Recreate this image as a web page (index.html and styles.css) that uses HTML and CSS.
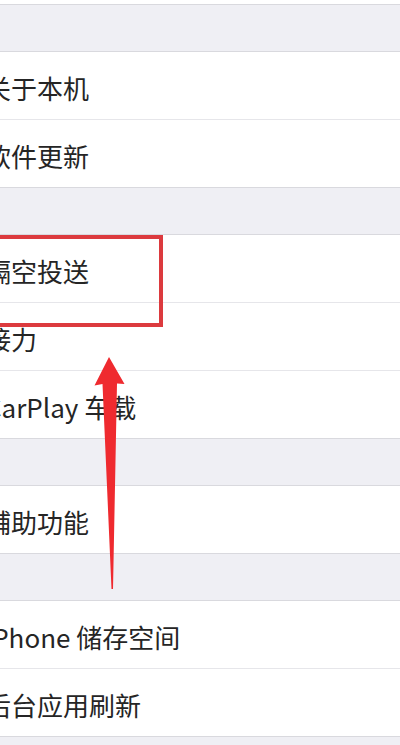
FILE: index.html
```html
<!DOCTYPE html>
<html lang="zh-CN">
<head>
  <meta charset="UTF-8" />
  <meta name="viewport" content="width=device-width, initial-scale=1.0"/>
  <title>通用</title>
  <link rel="stylesheet" href="styles.css">
</head>
<body>
  <div class="screen">
    <div class="group group-top"></div>
    <div class="gap"></div>

    <div class="group">
      <div class="row">关于本机</div>
      <div class="row">软件更新</div>
    </div>
    <div class="gap"></div>

    <div class="group">
      <div class="row">隔空投送</div>
      <div class="row">接力</div>
      <div class="row">CarPlay 车载</div>
    </div>
    <div class="gap"></div>

    <div class="group">
      <div class="row">辅助功能</div>
    </div>
    <div class="gap"></div>

    <div class="group">
      <div class="row">iPhone 储存空间</div>
      <div class="row">后台应用刷新</div>
    </div>
    <div class="gap"></div>

    <!-- annotation overlay -->
    <div class="mark-box"></div>
    <svg class="mark-arrow" width="40" height="240" viewBox="90 355 40 240">
      <path d="M109 357 L124.5 384 L117 383.5 L113 589 L111.5 589 L102.5 384 L94.5 385.5 Z" fill="#ef2a2f"/>
    </svg>
  </div>
</body>
</html>
```

FILE: styles.css
```css
:root {
  --grey: #efeff4;
  --edge: #d9d9de;
  --sep: #e6e6ea;
  --text: #252525;
  --mark: #dc3a3e;
}

html, body {
  margin: 0;
  padding: 0;
  background: var(--grey);
  overflow: hidden;
}

body {
  font-family: "Noto Sans CJK SC", "Noto Sans", sans-serif;
}

.screen {
  position: relative;
  width: 400px;
  height: 745px;
  overflow: hidden;
}

.group {
  background: #fff;
  border-top: 1px solid var(--edge);
  border-bottom: 1px solid var(--edge);
}

.group-top {
  height: 4px;
  border-top: none;
}

.gap {
  height: 46px;
}

.row {
  display: flex;
  align-items: center;
  height: 67px;
  padding-top: 4px;
  box-sizing: border-box;
  margin-left: -15px;
  font-size: 26px;
  color: var(--text);
  white-space: nowrap;
}

.row + .row {
  border-top: 1px solid var(--sep);
  height: 68px;
}

.mark-box {
  position: absolute;
  left: -10px;
  top: 235px;
  width: 173px;
  height: 92px;
  border: 4px solid var(--mark);
  box-sizing: border-box;
}

.mark-arrow {
  position: absolute;
  left: 90px;
  top: 355px;
}
```
